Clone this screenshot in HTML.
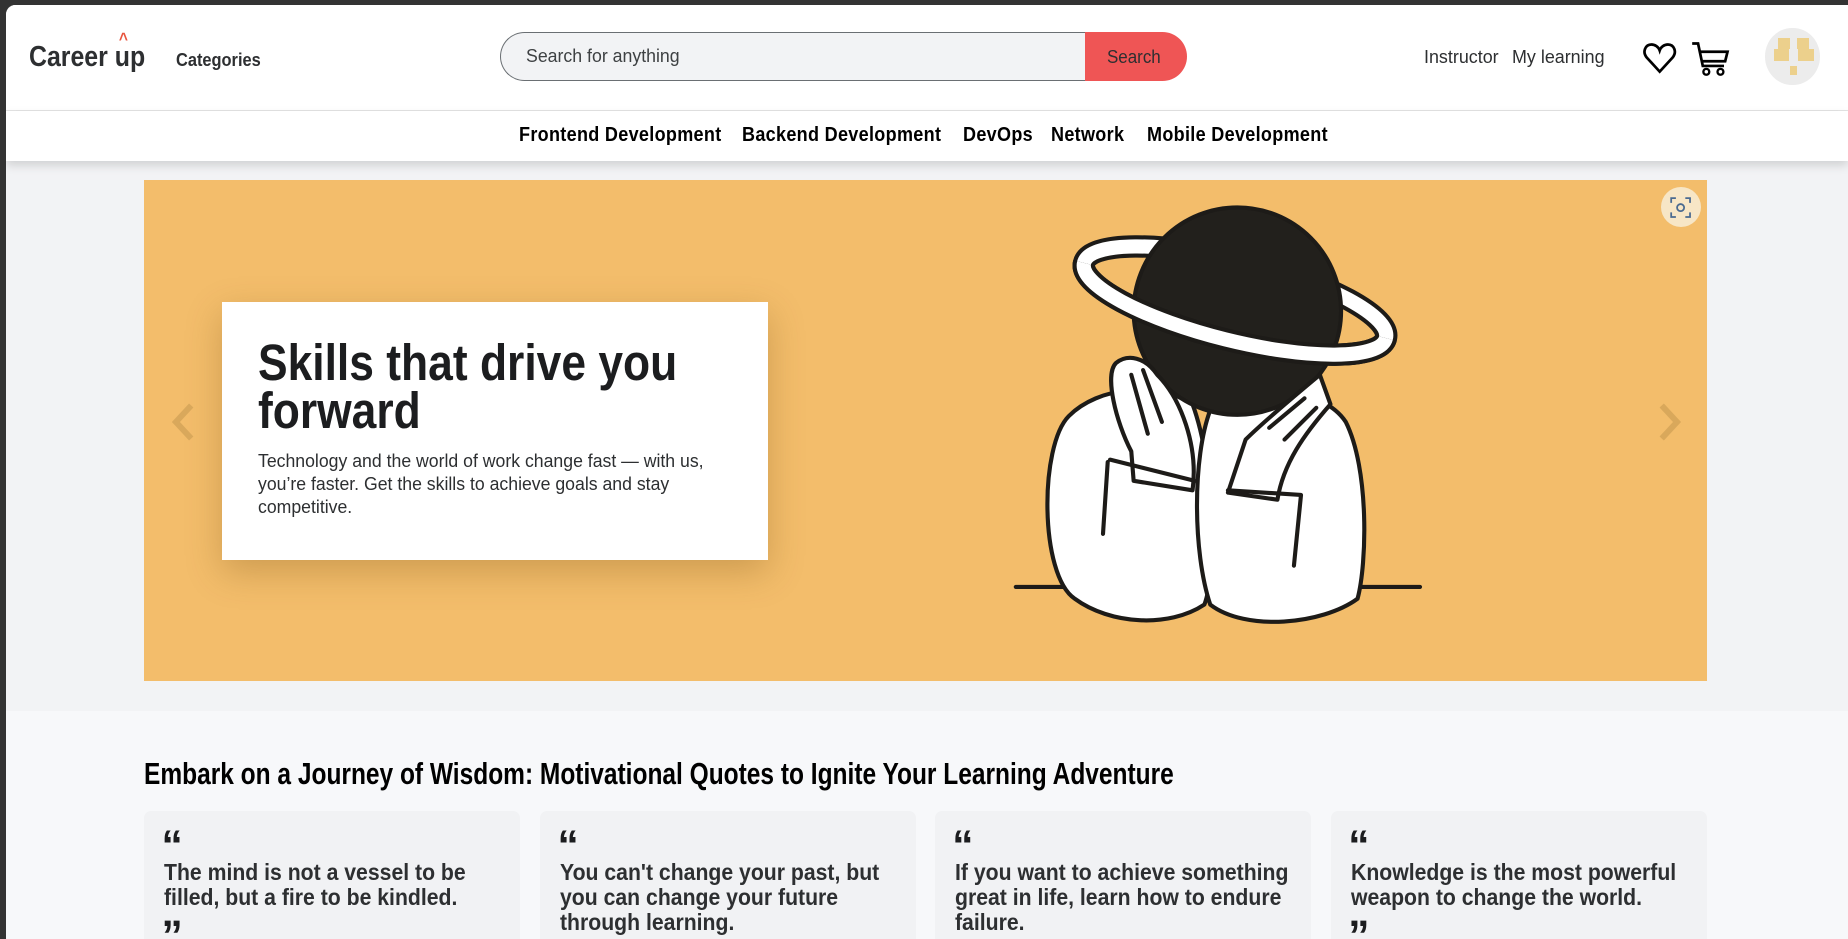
<!DOCTYPE html>
<html><head><meta charset="utf-8">
<style>
html,body{margin:0;padding:0;}
body{width:1568px;height:797px;zoom:1.178571;background:#333;overflow:hidden;font-family:"Liberation Sans",sans-serif;color:#1c1d1f;position:relative}
.page{position:absolute;left:5px;top:4px;width:1563px;height:793px;background:#f7f8fa;border-top-left-radius:8px;overflow:hidden}
.hdr{position:absolute;left:0;top:0;width:100%;height:89px;background:#fff;border-bottom:1px solid #e4e4e4}
.nav{position:absolute;left:0;top:90px;width:100%;height:43px;background:#fff;box-shadow:0 4px 8px rgba(0,0,0,.15);z-index:2}
.abs{position:absolute;white-space:nowrap;transform-origin:0 0}
.grey{position:absolute;left:0;top:133px;width:100%;height:466px;background:#f2f3f5}
.banner{position:absolute;left:117px;top:149px;width:1326px;height:425px;background:#f3bd6b}
.card{position:absolute;left:66px;top:103px;width:464px;height:219px;background:#fff;box-shadow:0 10px 28px rgba(120,80,20,.3)}
.q{position:absolute;top:684px;width:319px;height:120px;background:#f1f2f4;border-radius:6px}
.q .m{position:absolute;left:15px;top:12px;font-size:36px;font-weight:bold;line-height:36px}
.q .t{position:absolute;left:17px;top:42px;font-size:20px;font-weight:bold;line-height:21px;width:318px;color:#2d2f31;transform:scaleX(.9);transform-origin:0 0}
.q .e{position:absolute;left:15px;top:88px;font-size:36px;font-weight:bold;line-height:36px}
.n{top:11px;font-size:17px;font-weight:bold;letter-spacing:.3px;color:#000;transform:scaleX(.9)}
</style></head><body>
<div class="page">
 <div class="hdr">
  <div class="abs" style="left:20px;top:30px;font-size:24px;font-weight:bold;color:#2d2f31;transform:scaleX(.88)">Career <span style="position:relative">up<span style="position:absolute;left:4px;top:-9px;color:#e8553e;font-size:15px">^</span></span></div>
  <div class="abs" style="left:144px;top:38px;font-size:16px;font-weight:bold;color:#2d2f31;transform:scaleX(.87)">Categories</div>
  <div class="abs" style="left:419px;top:23px;width:497px;height:40px;border:1px solid #6a6f73;border-right:none;border-radius:21px 0 0 21px;background:#f2f3f5"></div>
  <div class="abs" style="left:441px;top:34px;font-size:16px;color:#3e4143;transform:scaleX(.94)">Search for anything</div>
  <div class="abs" style="left:916px;top:23px;width:86px;height:42px;background:#ef5555;border-radius:0 21px 21px 0"></div>
  <div class="abs" style="left:934px;top:35px;font-size:16px;color:#2d2f31;transform:scaleX(.9)">Search</div>
  <div class="abs" style="left:1203px;top:35px;font-size:16px;color:#2d2f31;transform:scaleX(.95)">Instructor</div>
  <div class="abs" style="left:1278px;top:35px;font-size:16px;color:#2d2f31;transform:scaleX(.95)">My learning</div>
  <svg class="abs" style="left:1388px;top:31px" width="30" height="30" viewBox="0 0 30 30"><path d="M15 26 L4 14 C0 9 3 3 8 3 C11 3 14 5 15 8 C16 5 19 3 22 3 C27 3 30 9 26 14 Z" fill="none" stroke="#000" stroke-width="2.3"/></svg>
  <svg class="abs" style="left:1430px;top:30px" width="34" height="32" viewBox="0 0 34 32"><path d="M1 3 H6 L10 22 H28 M8 10 H31 L29 18 H9.5" fill="none" stroke="#000" stroke-width="2.3"/><circle cx="13" cy="27" r="2.5" fill="none" stroke="#000" stroke-width="2"/><circle cx="25" cy="27" r="2.5" fill="none" stroke="#000" stroke-width="2"/></svg>
  <div class="abs" style="left:1493px;top:20px;width:46px;height:48px;border-radius:50%;background:#ececec"></div>
  <div class="abs" style="left:1504px;top:28px;width:10px;height:10px;background:#ecd08c"></div>
  <div class="abs" style="left:1520px;top:28px;width:10px;height:10px;background:#ecd08c"></div>
  <div class="abs" style="left:1500px;top:38px;width:13px;height:10px;background:#ecd08c"></div>
  <div class="abs" style="left:1521px;top:38px;width:13px;height:10px;background:#ecd08c"></div>
  <div class="abs" style="left:1514px;top:52px;width:6px;height:8px;background:#ecd08c"></div>
 </div>
 <div class="nav">
  <div class="abs n" style="left:435px">Frontend Development</div>
  <div class="abs n" style="left:625px">Backend Development</div>
  <div class="abs n" style="left:812px">DevOps</div>
  <div class="abs n" style="left:887px">Network</div>
  <div class="abs n" style="left:968px">Mobile Development</div>
 </div>
 <div class="grey"></div>
 <div class="banner">
  <div class="card">
   <div class="abs" style="left:31px;top:32px;font-size:43px;font-weight:bold;line-height:40px;white-space:normal;width:500px;color:#1c1d1f;transform:scaleX(.876)">Skills that drive you<br>forward</div>
   <div class="abs" style="left:31px;top:126px;font-size:16px;line-height:19.5px;white-space:normal;width:415px;color:#2d2f31;transform:scaleX(.937)">Technology and the world of work change fast — with us, you’re faster. Get the skills to achieve goals and stay competitive.</div>
  </div>
  <svg class="abs" style="left:22px;top:188px" width="22" height="34" viewBox="0 0 22 34"><path d="M18 3 L5 17 L18 31" fill="none" stroke="#d9a85b" stroke-width="5"/></svg>
  <svg class="abs" style="left:1284px;top:188px" width="22" height="34" viewBox="0 0 22 34"><path d="M4 3 L17 17 L4 31" fill="none" stroke="#d9a85b" stroke-width="5"/></svg>
  <div class="abs" style="left:1287px;top:6px;width:34px;height:34px;border-radius:50%;background:#f7e6c6"></div>
  <svg class="abs" style="left:1295px;top:14px" width="18" height="18" viewBox="0 0 18 18" fill="none" stroke="#4a6a90" stroke-width="1.5"><path d="M1 5V1H5M13 1H17V5M17 13V17H13M5 17H1V13"/><circle cx="9" cy="9" r="3"/></svg>
  <svg class="abs" style="left:730px;top:15px" width="360" height="380" viewBox="0 0 360 380">
   <defs><clipPath id="front"><rect x="-200" y="0" width="400" height="100"/></clipPath></defs>
   <g stroke="#1d1b18" stroke-width="3.5" stroke-linecap="round" stroke-linejoin="round">
    <path d="M10 330 H353" fill="none"/>
    <path d="M60 340 C30 320 30 210 55 185 C80 160 130 155 160 175 C180 230 180 320 170 345 C140 365 90 362 60 340 Z" fill="#fff"/>
    <path d="M175 345 C160 300 160 220 175 180 C210 155 270 160 290 190 C310 230 308 310 300 340 C270 362 205 368 175 345 Z" fill="#fff"/>
    <g transform="translate(196,87) rotate(14)">
     <ellipse cx="0" cy="0" rx="132" ry="34" fill="none" stroke="#1d1b18" stroke-width="19"/>
     <ellipse cx="0" cy="0" rx="132" ry="34" fill="none" stroke="#fff" stroke-width="12"/>
    </g>
    <circle cx="198" cy="96" r="88" fill="#22201c"/>
    <g transform="translate(196,87) rotate(14)" clip-path="url(#front)">
     <ellipse cx="0" cy="0" rx="132" ry="34" fill="none" stroke="#1d1b18" stroke-width="19"/>
     <ellipse cx="0" cy="0" rx="132" ry="34" fill="none" stroke="#fff" stroke-width="12"/>
    </g>
    <path d="M95 140 C85 150 95 190 108 215 L110 240 L160 248 C165 210 150 170 130 150 C120 135 105 132 95 140 Z" fill="#fff"/>
    <path d="M108 150 L122 200 M118 146 L134 190" fill="none"/>
    <path d="M268 150 C250 165 220 190 205 205 L190 250 L232 256 C237 225 255 200 277 175 Z" fill="#fff"/>
    <path d="M255 170 L225 195 M265 178 L238 205" fill="none"/>
    <path d="M90 222 L162 240 M190 248 L252 252 M88 224 L84 285 M252 252 L246 312" fill="none"/>
   </g>
  </svg>
 </div>
 <div class="abs" style="left:117px;top:638px;font-size:26px;font-weight:bold;color:#000;transform:scaleX(.80)">Embark on a Journey of Wisdom: Motivational Quotes to Ignite Your Learning Adventure</div>
 <div class="q" style="left:117px"><div class="m">“</div><div class="t">The mind is not a vessel to be filled, but a fire to be kindled.</div><div class="e">”</div></div>
 <div class="q" style="left:453px"><div class="m">“</div><div class="t">You can't change your past, but you can change your future through learning.</div></div>
 <div class="q" style="left:788px"><div class="m">“</div><div class="t">If you want to achieve something great in life, learn how to endure failure.</div></div>
 <div class="q" style="left:1124px"><div class="m">“</div><div class="t">Knowledge is the most powerful weapon to change the world.</div><div class="e">”</div></div>
</div>
</body></html>
